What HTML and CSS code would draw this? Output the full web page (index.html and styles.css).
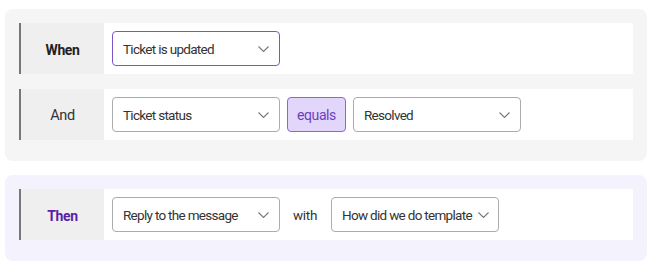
FILE: index.html
```html
<!DOCTYPE html>
<html lang="en">
<head>
    <meta charset="UTF-8">
    <meta name="viewport" content="width=device-width, initial-scale=1.0">
    <title>Automation rule</title>
    <link rel="stylesheet" href="styles.css">
</head>
<body>
    <div class="panel conditions">
        <div class="rule">
            <div class="rule-label strong">When</div>
            <div class="rule-body">
                <div class="select active">
                    <span>Ticket is updated</span>
                    <svg class="chevron" width="11" height="6" viewBox="0 0 11 6"><path d="M0.5 0.5 L5.5 5.5 L10.5 0.5" /></svg>
                </div>
            </div>
        </div>
        <div class="rule">
            <div class="rule-label">And</div>
            <div class="rule-body">
                <div class="select">
                    <span>Ticket status</span>
                    <svg class="chevron" width="11" height="6" viewBox="0 0 11 6"><path d="M0.5 0.5 L5.5 5.5 L10.5 0.5" /></svg>
                </div>
                <div class="operator">equals</div>
                <div class="select">
                    <span>Resolved</span>
                    <svg class="chevron" width="11" height="6" viewBox="0 0 11 6"><path d="M0.5 0.5 L5.5 5.5 L10.5 0.5" /></svg>
                </div>
            </div>
        </div>
    </div>

    <div class="panel actions">
        <div class="rule">
            <div class="rule-label strong purple">Then</div>
            <div class="rule-body">
                <div class="select">
                    <span>Reply to the message</span>
                    <svg class="chevron" width="11" height="6" viewBox="0 0 11 6"><path d="M0.5 0.5 L5.5 5.5 L10.5 0.5" /></svg>
                </div>
                <span class="joiner">with</span>
                <div class="select">
                    <span>How did we do template</span>
                    <svg class="chevron" width="11" height="6" viewBox="0 0 11 6"><path d="M0.5 0.5 L5.5 5.5 L10.5 0.5" /></svg>
                </div>
            </div>
        </div>
    </div>
</body>
</html>
```

FILE: styles.css
```css
body { margin: 0; padding: 9px 0 0 5px; background: #fff; font-family: Roboto, "Noto Sans", sans-serif; color: #333; }

.panel { width: 614px; padding: 14px 14px 21px 14px; border-radius: 8px; display: flex; flex-direction: column; gap: 15px; }
.conditions { background: #f5f5f5; }
.actions { background: #f3f2fd; margin-top: 14px; }

.rule { display: flex; height: 51px; background: #fff; }
.rule-label { width: 83px; border-left: 2px solid #777; background: #efefef; display: flex; align-items: center; justify-content: center; padding-top: 2px; font-size: 14.5px; letter-spacing: -0.3px; color: #333; }
.strong { font-weight: 700; color: #222; font-size: 14px; letter-spacing: -0.4px; }
.purple { color: #5a1fa6; }

.rule-body { display: flex; align-items: center; gap: 7px; padding-left: 8px; }

.select { box-sizing: border-box; width: 168px; height: 35px; border: 1px solid #ababab; border-radius: 4px; display: flex; align-items: center; justify-content: space-between; gap: 6px; padding: 1px 10px 0 10px; font-size: 13.5px; letter-spacing: -0.7px; white-space: nowrap; color: #333; background: #fff; }
.select.active { border: 1.5px solid #7d56c6; }
.chevron { flex: none; fill: none; stroke: #777; stroke-width: 1.1; }

.operator { box-sizing: border-box; height: 35px; padding: 1px 9px 0 9px; display: flex; align-items: center; background: #e2d6fb; border: 1px solid #8d66d4; border-radius: 4px; color: #6a3fc2; font-size: 14px; letter-spacing: -0.4px; }

.joiner { margin: 0 7px 0 6px; font-size: 13.5px; letter-spacing: -0.3px; color: #333; }
```
